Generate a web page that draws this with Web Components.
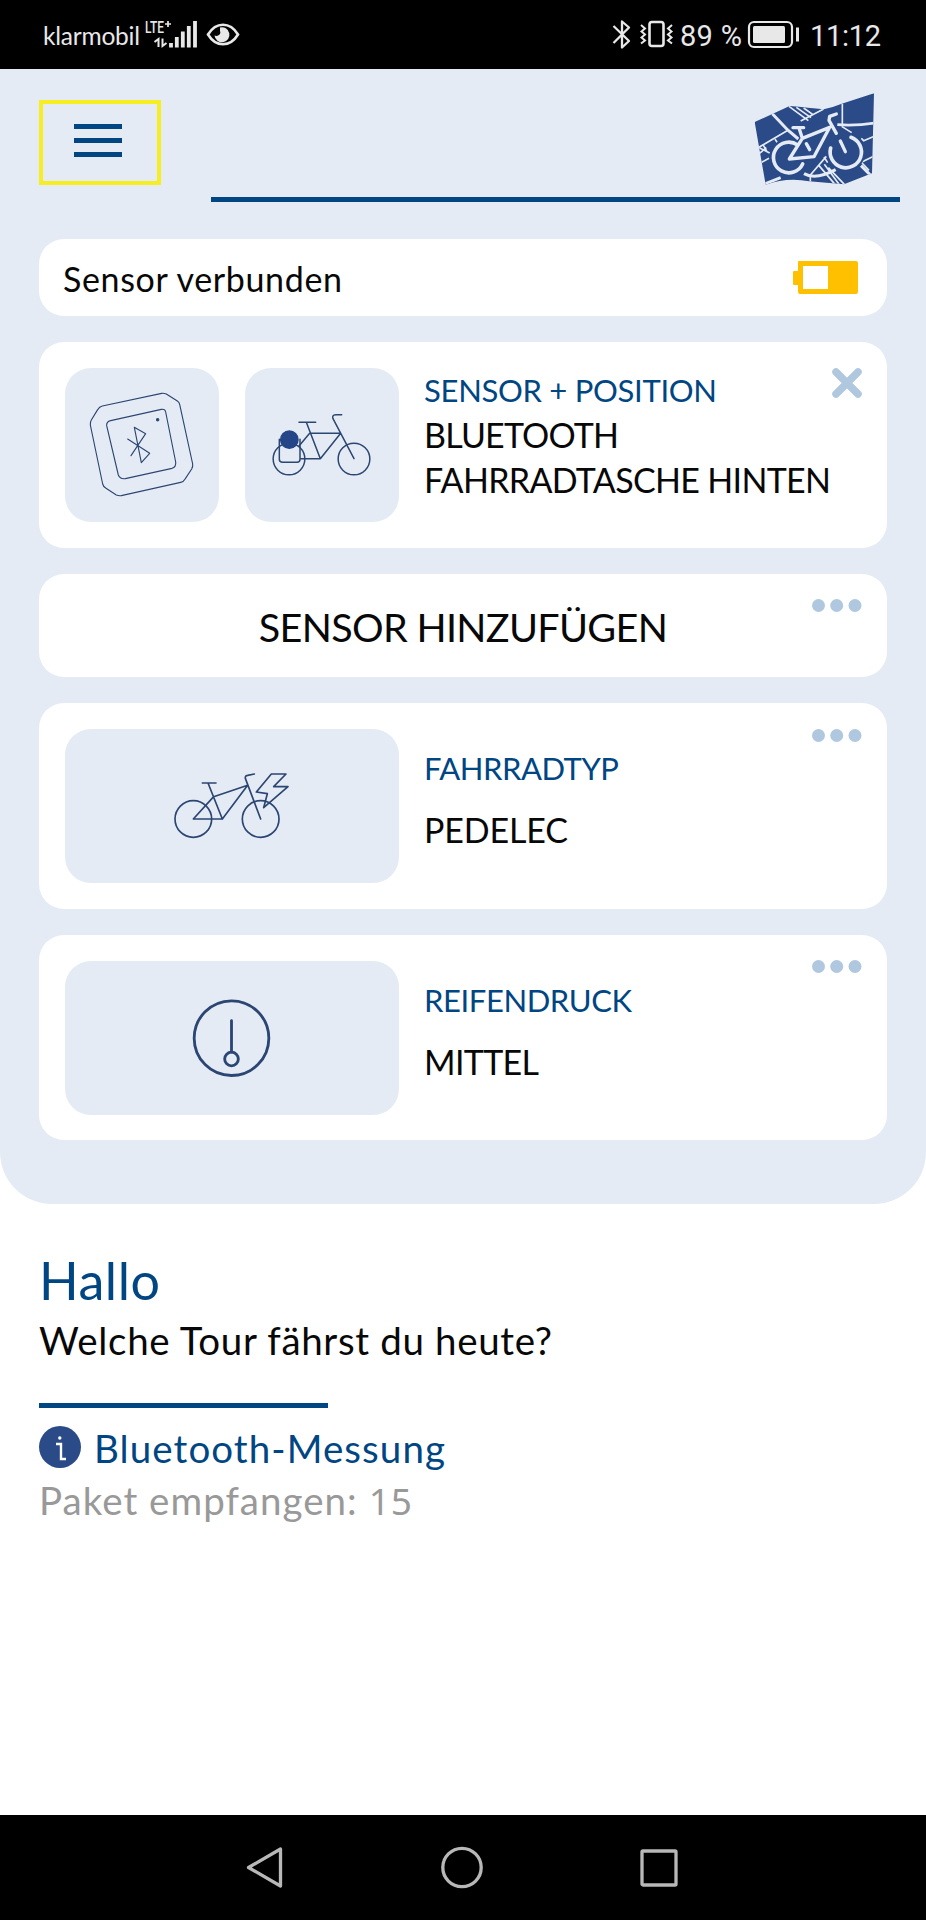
<!DOCTYPE html>
<html lang="de">
<head>
<meta charset="utf-8">
<title>Sensor</title>
<style>
    body {
        margin: 0;
        background: #fff;
        color: #080808;
        font-family: Lato, "Liberation Sans", sans-serif;
    }
</style>
</head>
<body>
<app-screen></app-screen>

<script>
class BaseElement extends HTMLElement {
    constructor() {
        super();
        this.attachShadow({ mode: 'open' });
    }

    connectedCallback() {
        this.shadowRoot.innerHTML = this.template();
    }
}

// One line of text, spaced out to the given width
class TextLine extends BaseElement {
    connectedCallback() {
        super.connectedCallback();
        const span = this.shadowRoot.querySelector('span');
        const width = parseFloat(this.getAttribute('width'));
        const count = this.textContent.length;
        if (width && count > 1) {
            const natural = span.getBoundingClientRect().width;
            span.style.letterSpacing = (width - natural) / (count - 1) + 'px';
        }
    }

    template() {
        return `
            <style>
                :host { display: block; white-space: nowrap; }
                span { display: inline-block; }
            </style>
            <span><slot></slot></span>
        `;
    }
}

class StatusBar extends BaseElement {
    template() {
        return `
            <style>
                :host {
                    display: flex;
                    box-sizing: border-box;
                    height: 69px;
                    padding: 0 45px 0 43px;
                    background: #000;
                    color: #e8e8e8;
                }
                svg { display: block; fill: none; stroke: #e8e8e8; }
                .carrier { font-size: 24.500px; line-height: 71px; width: 100px; }
                .right { display: flex; margin-left: auto; }
                .num { font-family: Roboto, sans-serif; font-size: 29px; line-height: 72px; }
                .percent { width: 66px; }
                .time { width: 71px; }
            </style>
            <text-line class="carrier" width="97">klarmobil</text-line>
            <svg width="100" height="69" viewBox="143 0 100 69">
                <text x="145" y="33" font-family="Roboto, sans-serif" font-weight="500" font-size="16" textLength="19" lengthAdjust="spacingAndGlyphs" fill="#e8e8e8" stroke="none">LTE</text>
                <path d="M165 24h6M168 21v6" stroke-width="1.7"/>
                <path d="M154.500 42l4-3v8M162.500 38.500v7.500l4-3" stroke-width="2"/>
                <path d="M171 43v4.500M176.800 37v10.500M182.800 31.500v16M188.800 26v21.500M195 21v26.500" stroke-width="3.800"/>
                <path d="M208 34.500C216 21.500 230 21.500 238 34.500C230 47.500 216 47.500 208 34.500Z" stroke-width="2.600"/>
                <path d="M220 27.500a7.500 7.500 0 1 1-5.500 8c3 1.500 7-1 5.500-4.500Z" fill="#e8e8e8" stroke="none"/>
            </svg>
            <div class="right">
                <svg width="69" height="69" viewBox="612 0 69 69">
                    <path d="M614.500 26L630 41l-7 6.500V21.500l7 6L614.500 43" stroke-width="2.300" stroke-linejoin="round"/>
                    <rect x="650.500" y="22" width="14" height="24" rx="2.500" stroke-width="2.600"/>
                    <path d="M642 25l4 3.500-3.500 3 3.500 3-3.500 3 3.500 3-4 3M673 25l-4 3.500 3.500 3-3.500 3 3.500 3-3.500 3 4 3" stroke-width="2"/>
                </svg>
                <text-line class="num percent" width="62">89 %</text-line>
                <svg width="64" height="69" viewBox="747 0 64 69">
                    <rect x="750" y="22" width="43" height="25" rx="5" stroke-width="2.200"/>
                    <rect x="754" y="26" width="32" height="17" rx="1.500" fill="#e8e8e8" stroke="none"/>
                    <path d="M798.500 27.500v14" stroke-width="3"/>
                </svg>
                <text-line class="num time" width="71">11:12</text-line>
            </div>
        `;
    }
}

class AppHeader extends BaseElement {
    template() {
        return `
            <style>
                :host {
                    display: flex;
                    justify-content: space-between;
                    height: 133px;
                    padding: 0 26px 0 39px;
                }
                .menu {
                    box-sizing: border-box;
                    width: 122px;
                    height: 85px;
                    margin-top: 31px;
                    border: 4px solid #f6ee22;
                    display: flex;
                    flex-direction: column;
                    align-items: center;
                    justify-content: center;
                    gap: 9px;
                    padding: 0 4px 4px 0;
                }
                .menu i { width: 48px; height: 5px; background: #004683; }
                .brand {
                    box-sizing: border-box;
                    width: 689px;
                    border-bottom: 5px solid #004683;
                    padding: 24px 25px 0 0;
                    display: flex;
                    justify-content: flex-end;
                }
                svg { display: block; }
            </style>
            <div class="menu"><i></i><i></i><i></i></div>
            <div class="brand">
                <svg width="121" height="92" viewBox="75 38 363 276">
                    <clipPath id="map"><path d="M77 125L182 77Q240 82 284 87Q310 82 336 71L435 39L429 279L345 312L240 303Q175 290 110 313Z"/></clipPath>
                    <g clip-path="url(#map)" fill="none" stroke="#e5ebf4">
                        <path d="M70 30h370v290H70z" fill="#2a4b87" stroke="none"/>
                        <path d="M130 100L176 149L208 176" stroke-width="9"/>
                        <path d="M86 203L178 149M90 202L122 218M88 222L112 202M98 246L120 234M138 177L146 188M102 193L114 214" stroke-width="5"/>
                        <path d="M180 78L238 121M202 81L246 112M224 83L252 103M284 86L215 122M340 70V134" stroke-width="5"/>
                        <path d="M325 133Q380 137 436 128" stroke-width="8"/>
                        <path d="M338 138L368 157M436 168L404 181L397 174M434 228L397 246L420 270M285 230L296 247M292 228L244 284V305M270 256L318 312M286 252L330 312M298 262L346 312" stroke-width="5"/>
                        <path d="M225 280Q260 300 320 268M396 256L424 284M104 312L155 292" stroke-width="9"/>
                        <g stroke="#2a4b87" stroke-width="19" stroke-linecap="round">
                            <path d="M212 197A47 47 0 1 0 221 251M368 170A47 47 0 1 1 307 206M181 236L222 174L302 141L255 229Z"/>
                        </g>
                        <g stroke-width="10" stroke-linecap="round" stroke-linejoin="round">
                            <path d="M206 194A46 46 0 1 0 221 251" stroke-width="11"/>
                            <path d="M366 171A47 47 0 1 1 305 203" stroke-width="11"/>
                            <path d="M192 142H224M210 143L220 174L181 236L255 229L302 141L220 174M232 190L242 208M322 101L302 108L300 120L322 159M334 182L349 214"/>
                        </g>
                    </g>
                </svg>
            </div>
        `;
    }
}

class UiCard extends BaseElement {
    template() {
        const action = this.getAttribute('action');
        const icons = {
            close: '<svg width="30" height="30" viewBox="0 0 30 30"><path d="M4 4L26 26M26 4L4 26" stroke="#b0c8df" stroke-width="7.500" stroke-linecap="round"/></svg>',
            more: '<svg width="50" height="13" viewBox="0 0 50 13" fill="#b0c8df"><circle cx="6.500" cy="6.500" r="6.500"/><circle cx="24.700" cy="6.500" r="6.500"/><circle cx="43" cy="6.500" r="6.500"/></svg>'
        };
        return `
            <style>
                :host {
                    display: flex;
                    position: relative;
                    box-sizing: border-box;
                    background: #fff;
                    border-radius: 25px;
                    padding: 26px;
                    gap: 26px;
                }
                .action { position: absolute; top: 25.500px; right: 25px; line-height: 0; }
            </style>
            <slot></slot>
            ${action ? `<div class="action">${icons[action]}</div>` : ''}
        `;
    }
}

class IconTile extends BaseElement {
    template() {
        const icons = {
            sensor: `<svg width="154" height="154" viewBox="75 84 462 462" stroke-width="3.400">
                <path d="M187 198L365 160Q372 159 379 162L412 183Q418 187 419 193L458 372Q459 380 455 387L436 416Q431 425 422 427L244 467Q236 468 229 465L198 445Q190 440 188 432L151 255Q150 247 154 240L173 209Q178 200 187 198Z"/>
                <path d="M212 242L364 208Q375 206 377 216L407 366Q409 381 396 385L256 416Q240 418 235 405L200 257Q199 245 212 242Z"/>
                <path d="M263 297L329 340L304 368L283 262L317 281L273 347"/>
                <circle cx="353" cy="239" r="3.500" fill="#2b4672"/></svg>`,
            bag: `<svg width="154" height="154" viewBox="615 84 462 462" stroke-width="4.500">
                <circle cx="747" cy="357" r="47.500"/><circle cx="942" cy="357" r="47.500"/>
                <path d="M777 247H827M799 247L841 356L902 280H809L777 318M782 356H841M942 356L879 236Q875 225 887 224H905"/>
                <path d="M718 298V358Q718 367 728 367H771Q780 367 780 358V298"/>
                <circle cx="748" cy="299" r="26" fill="#244587" stroke="#244587"/></svg>`,
            pedelec: `<svg width="334" height="154" viewBox="15 27 1002 462" stroke-width="5">
                <circle cx="400" cy="297" r="55"/><circle cx="602" cy="297" r="55"/>
                <path d="M427 189H468M444 189L487 297H400L461 230L563 196L487 297M602 297L556 175Q555 167 563 166L583 162"/>
                <path d="M634 162H678L641 200H684L611 263L622 221L589 216Z"/></svg>`,
            pressure: `<svg width="334" height="154" viewBox="15 30 1002 462" stroke-width="8.500">
                <circle cx="514.500" cy="261.500" r="112"/><circle cx="514.500" cy="324" r="20.500"/>
                <path d="M514.500 209V303"/></svg>`
        };
        return `
            <style>
                :host {
                    display: block;
                    flex: none;
                    width: 154px;
                    height: 154px;
                    border-radius: 26px;
                    background: #e5ebf4;
                }
                :host([wide]) { width: 334px; }
                svg { display: block; fill: none; stroke: #2b4672; stroke-linecap: round; stroke-linejoin: round; }
            </style>
            ${icons[this.getAttribute('icon')]}
        `;
    }
}

class AppScreen extends BaseElement {
    template() {
        return `
            <style>
                :host { display: flex; flex-direction: column; height: 1920px; }
                .panel {
                    height: 1135px;
                    background: #e5ebf4;
                    border-radius: 0 0 52px 52px;
                }
                .cards { display: flex; flex-direction: column; gap: 26px; padding: 37px 39px 0; }
                .status { height: 77px; justify-content: space-between; align-items: center; padding: 0 29px 0 24px; }
                .add { height: 103.500px; justify-content: center; padding: 0; }
                .tall { height: 205.500px; }
                .info { display: flex; flex-direction: column; margin-left: -1px; }
                .label { color: #004683; font-size: 31px; line-height: 44px; }
                .value { font-size: 34px; line-height: 45px; }
                .spaced { padding-top: 17px; }
                .spaced .value { margin-top: 17px; }
                .intro { padding: 43px 39px 0; flex: 1; }
                .hello { color: #004683; font-size: 52px; line-height: 66px; }
                .big { font-size: 38.500px; line-height: 52px; }
                .question { margin-top: 1px; }
                hr { border: 0; margin: 37px 0 0; width: 288.500px; height: 5px; background: #004683; }
                .measure { display: flex; gap: 13px; align-items: center; height: 52px; margin-top: 13px; color: #004683; }
                .measure text-line { padding-top: 2px; }
                .packets { color: #999; margin-top: 1px; }
                .digits { font-family: "Noto Sans", sans-serif; font-size: 37px; line-height: 1; }
                svg { display: block; }
                nav {
                    height: 105px;
                    background: #000;
                    display: flex;
                    justify-content: space-between;
                    padding: 0 248px 0 246px;
                }
                nav svg { fill: none; stroke: #b8b8b8; stroke-width: 3.300; stroke-linejoin: round; }
            </style>
            <status-bar></status-bar>
            <div class="panel">
                <app-header></app-header>
                <div class="cards">
                    <ui-card class="status">
                        <text-line style="font-size:34px;line-height:48px;margin-top:3px" width="279">Sensor verbunden</text-line>
                        <svg width="65" height="33" viewBox="0 0 65 33" fill="#ffc000"><path d="M6 0H63Q65 0 65 2V31Q65 33 63 33H7Q5 33 5 31V24H1Q0 24 0 23V11Q0 10 1 10H5V1Q5 0 6 0Z"/><path d="M10 5H35V28H10Z" fill="#fff"/></svg>
                    </ui-card>
                    <ui-card class="tall" action="close">
                        <icon-tile icon="sensor"></icon-tile>
                        <icon-tile icon="bag"></icon-tile>
                        <div class="info">
                            <text-line class="label" width="293">SENSOR + POSITION</text-line>
                            <text-line class="value" width="195">BLUETOOTH</text-line>
                            <text-line class="value" width="407">FAHRRADTASCHE HINTEN</text-line>
                        </div>
                    </ui-card>
                    <ui-card class="add" action="more">
                        <text-line style="font-size:39.500px;line-height:106px" width="409">SENSOR HINZUFÜGEN</text-line>
                    </ui-card>
                    <ui-card class="tall" action="more">
                        <icon-tile icon="pedelec" wide></icon-tile>
                        <div class="info spaced">
                            <text-line class="label" width="195">FAHRRADTYP</text-line>
                            <text-line class="value" width="144">PEDELEC</text-line>
                        </div>
                    </ui-card>
                    <ui-card class="tall" action="more">
                        <icon-tile icon="pressure" wide></icon-tile>
                        <div class="info spaced">
                            <text-line class="label" width="208">REIFENDRUCK</text-line>
                            <text-line class="value" width="115">MITTEL</text-line>
                        </div>
                    </ui-card>
                </div>
            </div>
            <div class="intro">
                <text-line class="hello" width="121">Hallo</text-line>
                <text-line class="big question" width="513">Welche Tour fährst du heute?</text-line>
                <hr>
                <div class="measure">
                    <svg width="42" height="42" viewBox="0 0 42 42"><circle cx="21" cy="21" r="21" fill="#2a4b87"/><g fill="none" stroke="#fff" stroke-width="2.400"><path d="M17 18h5v15h5"/><circle cx="20.800" cy="12" r="1.700" fill="#fff" stroke="none"/></g></svg>
                    <text-line class="big" width="351">Bluetooth-Messung</text-line>
                </div>
                <text-line class="big packets" width="373">Paket empfangen: <span class="digits">15</span></text-line>
            </div>
            <nav>
                <svg width="38" height="105" viewBox="0 0 38 105"><path d="M2.500 52.500L34.500 34V71Z"/></svg>
                <svg width="42" height="105" viewBox="0 0 42 105"><circle cx="21" cy="52.500" r="19.200"/></svg>
                <svg width="38" height="105" viewBox="0 0 38 105"><rect x="2" y="36" width="34" height="34" rx="1"/></svg>
            </nav>
        `;
    }
}

customElements.define('text-line', TextLine);
customElements.define('status-bar', StatusBar);
customElements.define('app-header', AppHeader);
customElements.define('ui-card', UiCard);
customElements.define('icon-tile', IconTile);
customElements.define('app-screen', AppScreen);
</script>
</body>
</html>
